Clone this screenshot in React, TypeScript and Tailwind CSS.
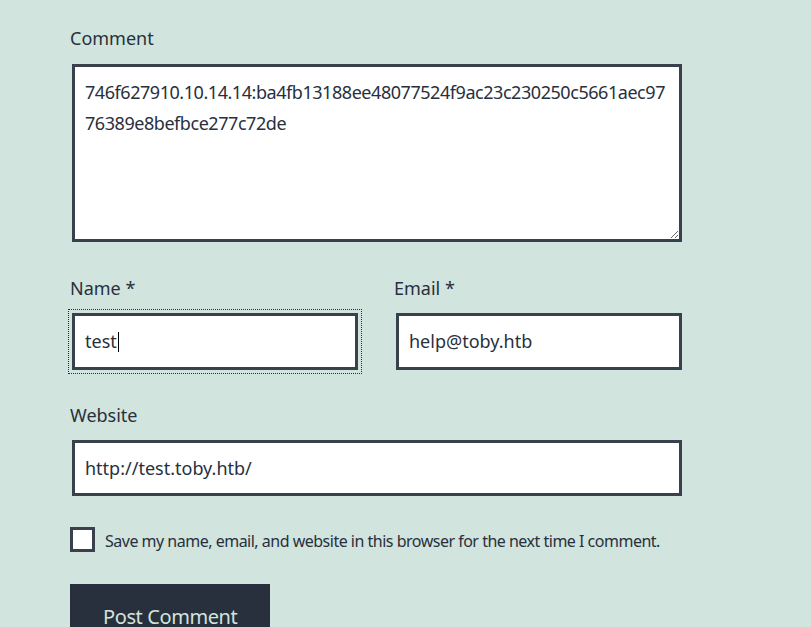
import React from "react";

export default function App() {
  const font = { fontFamily: '"Noto Sans", "Open Sans", sans-serif' };
  return (
    <div
      className="min-h-[627px] w-[811px] overflow-hidden bg-[#d1e4dd] text-[#28303d]"
      style={font}
    >
      <div className="ml-[70px] w-[612px] pt-[23px]">
        <label className="block h-[31px] text-[18px] leading-[31px]">Comment</label>
        <textarea
          readOnly
          wrap="off"
          className="mt-[10px] ml-[2px] block h-[178px] w-[610px] resize-y overflow-hidden border-[3px] border-[#39414d] bg-white px-[10px] py-[10px] text-[18px] leading-[30.6px] tracking-[-0.45px] text-[#28303d] outline-none"
          defaultValue={
            "746f627910.10.14.14:ba4fb13188ee48077524f9ac23c230250c5661aec97\n76389e8befbce277c72de"
          }
        />
        <div className="mt-[31px] flex gap-[36px]">
          <div className="w-[288px]">
            <label className="block h-[30px] text-[18px] leading-[30px]">Name *</label>
            <div className="mt-[10px] ml-[2px] flex h-[57px] w-[286px] items-center border-[3px] border-[#39414d] bg-white px-[10px] text-[18px] outline outline-1 outline-dotted outline-offset-[3px] outline-[#28303d]">
              <span>test</span>
              <span className="ml-[1px] inline-block h-[20px] w-[1px] bg-[#000]" />
            </div>
          </div>
          <div className="w-[288px]">
            <label className="block h-[30px] text-[18px] leading-[30px]">Email *</label>
            <div className="mt-[10px] ml-[2px] flex h-[57px] w-[286px] items-center border-[3px] border-[#39414d] bg-white px-[10px] text-[18px]">
              <span>help@toby.htb</span>
            </div>
          </div>
        </div>
        <label className="mt-[30px] block h-[30px] text-[18px] leading-[30px]">Website</label>
        <div className="mt-[10px] ml-[2px] flex h-[56px] w-[610px] items-center border-[3px] border-[#39414d] bg-white px-[10px] text-[18px]">
          <span>http://test.toby.htb/</span>
        </div>
        <div className="mt-[31px] flex h-[25px] items-start gap-[10px]">
          <span className="block h-[25px] w-[25px] shrink-0 border-[3px] border-[#39414d] bg-white" />
          <span className="mt-[2px] block h-[25px] text-[16px] leading-[25px] tracking-[-0.5px]">
            Save my name, email, and website in this browser for the next time I comment.
          </span>
        </div>
        <button className="mt-[32px] block border-[3px] border-[#28303d] bg-[#28303d] px-[30px] py-[15px] text-[20px] leading-[30px] tracking-[-0.4px] text-[#d1e4dd]">
          Post Comment
        </button>
      </div>
    </div>
  );
}
